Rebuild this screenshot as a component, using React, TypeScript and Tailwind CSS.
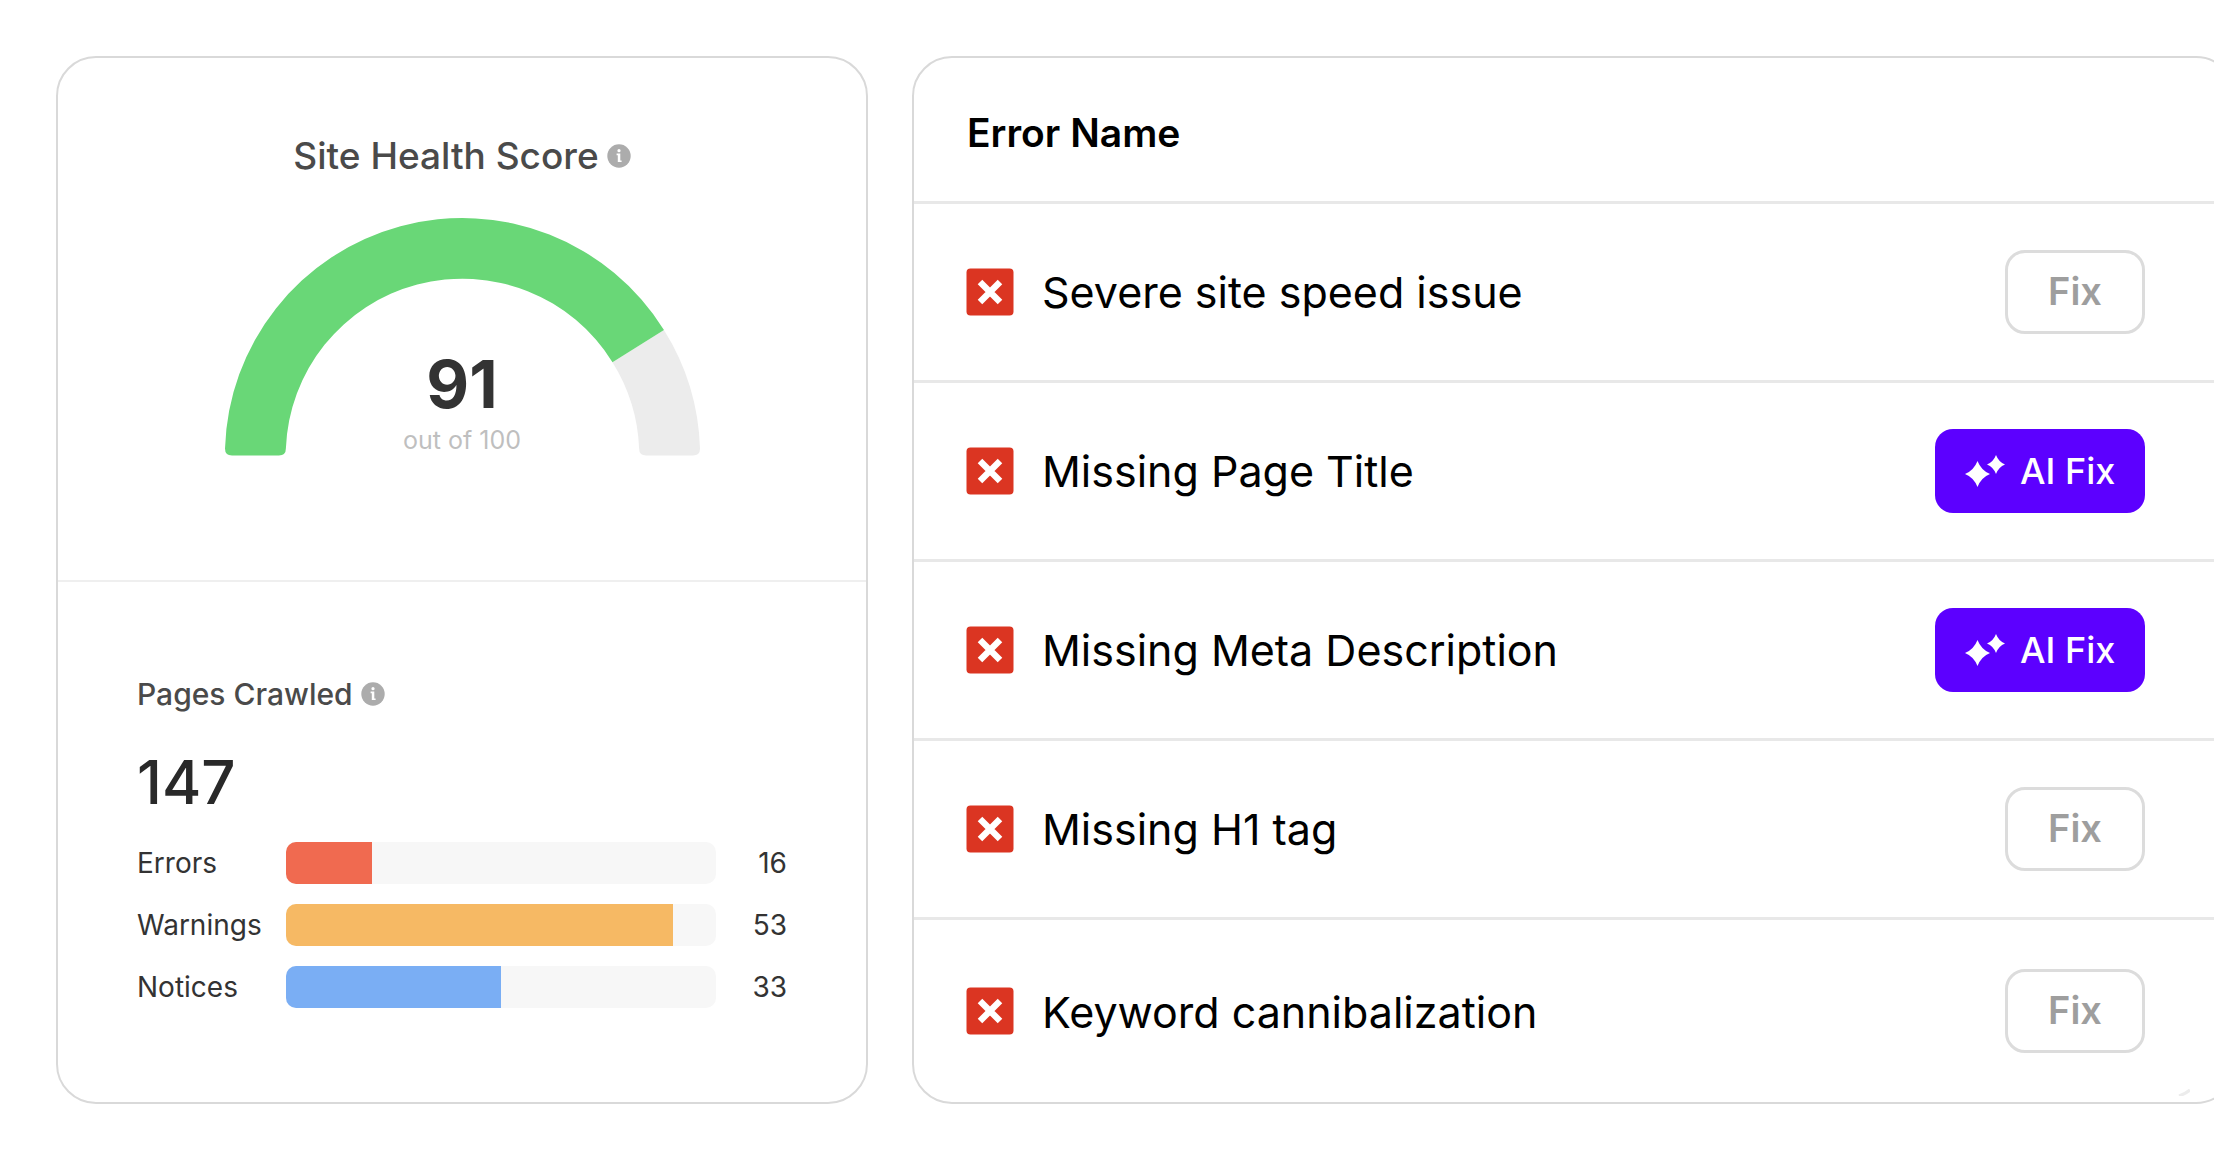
type Crawl = {
  label: string;
  count: number;
  percent: number;
  color: string;
};

type SiteError = {
  name: string;
  ai: boolean;
};

const CRAWL: Crawl[] = [
  { label: "Errors", count: 16, percent: 20, color: "bg-[#f06a50]" },
  { label: "Warnings", count: 53, percent: 90, color: "bg-[#f6b964]" },
  { label: "Notices", count: 33, percent: 50, color: "bg-[#7aaef4]" },
];

const ERRORS: SiteError[] = [
  { name: "Severe site speed issue", ai: false },
  { name: "Missing Page Title", ai: true },
  { name: "Missing Meta Description", ai: true },
  { name: "Missing H1 tag", ai: false },
  { name: "Keyword cannibalization", ai: false },
];

function InfoIcon() {
  return (
    <svg viewBox="0 0 24 24" className="size-6 shrink-0" aria-hidden="true">
      <circle cx="12" cy="12" r="11.7" fill="#acacac" />
      <circle cx="12" cy="6.7" r="1.6" fill="#fff" />
      <path d="M9.6 9.6h3.7v6.8h1.3v1.7H10.8v-6.8H9.6z" fill="#fff" />
    </svg>
  );
}

function CrossIcon() {
  return (
    <svg viewBox="0 0 48 48" className="size-12 shrink-0" aria-hidden="true">
      <rect x="0.5" y="0.5" width="47" height="47" rx="4" fill="#db3522" />
      <path
        d="M14 14l20 20M34 14L14 34"
        stroke="#fff"
        strokeWidth="6.4"
        fill="none"
      />
    </svg>
  );
}

function SparklesIcon() {
  return (
    <svg viewBox="0 0 40 32" className="h-8 w-10 shrink-0" aria-hidden="true">
      <path
        d="M12.5 6Q16.2 15.5 25 19Q16.2 22.5 12.5 32Q8.8 22.5 0 19Q8.8 15.5 12.5 6Z"
        fill="#fff"
      />
      <path
        d="M31 0Q33.6 6.9 40 9.5Q33.6 12.1 31 19Q28.4 12.1 22 9.5Q28.4 6.9 31 0Z"
        fill="#fff"
      />
    </svg>
  );
}

function Gauge() {
  return (
    <div className="relative mx-auto w-[475px]">
      <svg viewBox="0 0 476 238" className="block w-full" aria-hidden="true">
        <path
          d="M439.9 112.2A238 238 0 0 1 476 231Q476 238 469 238H422Q415 238 415 231A177 177 0 0 0 388.3 144.5Z"
          fill="#ececec"
        />
        <path
          d="M0 231A238 238 0 0 1 439.9 112.2L388.3 144.5A177 177 0 0 0 61 231Q61 238 54 238H7Q0 238 0 231Z"
          fill="#69d777"
        />
      </svg>
      <div className="absolute inset-x-0 bottom-0 text-center">
        <p className="mb-1 text-[66px] leading-[72px] font-bold text-[#333]">91</p>
        <p className="text-[25px] leading-8 text-[#bfbfbf]">out of 100</p>
      </div>
    </div>
  );
}

function FixButton({ ai }: { ai: boolean }) {
  if (ai) {
    return (
      <button className="inline-flex h-[84px] w-[210px] items-center gap-[15px] rounded-[18px] bg-[#5c00ff] pl-[30px] text-[36px] font-medium text-white">
        <SparklesIcon />
        AI Fix
      </button>
    );
  }
  return (
    <button className="inline-flex h-[84px] w-[140px] items-center justify-center rounded-[20px] border-3 border-[#dcdcdc] text-[38px] font-semibold text-[#9e9e9e]">
      Fix
    </button>
  );
}

export default function App() {
  return (
    <main className="overflow-hidden bg-white py-14 pl-14 font-['Inter',sans-serif]">
      <div className="-mr-[22px] grid grid-cols-[minmax(0,812fr)_minmax(0,1324fr)] gap-11">
        <section className="rounded-[40px] border-2 border-[#d9d9d9]">
          <div className="border-b-2 border-[#efefef] pt-[86px] pb-[124px]">
            <h2 className="mb-[50px] flex h-6 items-center justify-center gap-2 text-[37px] font-medium text-[#4a4a4a]">
              Site Health Score
              <InfoIcon />
            </h2>
            <Gauge />
          </div>

          <div className="px-[79px] pt-[92px]">
            <h3 className="flex items-center gap-2 text-[30px] leading-10 font-medium text-[#4a4a4a]">
              Pages Crawled
              <InfoIcon />
            </h3>
            <p className="mt-8 mb-6 text-[60px] leading-[72px] font-medium text-[#292929]">
              147
            </p>
            <ul className="flex flex-col gap-5">
              {CRAWL.map((item) => (
                <li
                  key={item.label}
                  className="flex items-center text-[28px] leading-[42px] text-[#333]"
                >
                  <span className="w-[149px] shrink-0">{item.label}</span>
                  <div className="h-[42px] flex-1 overflow-hidden rounded-[10px] bg-[#f7f7f7]">
                    <div
                      className={`h-full ${item.color}`}
                      style={{ width: `${item.percent}%` }}
                    />
                  </div>
                  <span className="w-[71px] shrink-0 text-right">{item.count}</span>
                </li>
              ))}
            </ul>
          </div>
        </section>

        <section className="relative rounded-[40px] border-2 border-[#d9d9d9]">
          <table className="w-full text-left">
            <thead>
              <tr className="h-36 border-b-3 border-[#e8e8e8]">
                <th
                  colSpan={2}
                  className="pt-2 pl-[53px] text-[39px] font-semibold text-black"
                >
                  Error Name
                </th>
              </tr>
            </thead>
            <tbody>
              {ERRORS.map((error) => (
                <tr
                  key={error.name}
                  className="h-[179px] border-b-3 border-[#e8e8e8] last:h-[184px] last:border-0"
                >
                  <td className="pl-[52px]">
                    <div className="flex items-center gap-7 text-[43px] text-black">
                      <CrossIcon />
                      <span className="pt-0.5">{error.name}</span>
                    </div>
                  </td>
                  <td className="pr-[89px] text-right">
                    <FixButton ai={error.ai} />
                  </td>
                </tr>
              ))}
            </tbody>
          </table>
          {/* corner grip */}
          <svg
            viewBox="0 0 12 8"
            className="absolute right-11 bottom-1.5 h-2 w-3"
            aria-hidden="true"
          >
            <path d="M1 8Q7 6 12 2" stroke="#ececec" strokeWidth="3" fill="none" />
          </svg>
        </section>
      </div>
    </main>
  );
}
